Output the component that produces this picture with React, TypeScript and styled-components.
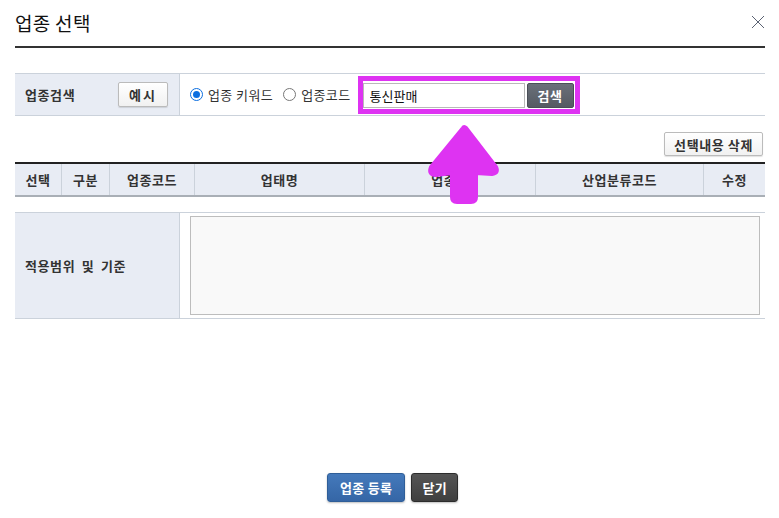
import React from "react";
import styled, { createGlobalStyle } from "styled-components";

const Global = createGlobalStyle`
  html, body { margin: 0; padding: 0; background: #fff; }
  body { font-family: "Noto Sans CJK KR", "Noto Sans", sans-serif; color: #333; }
  * { box-sizing: border-box; }
`;

const Dialog = styled.div`
  position: relative;
  width: 779px;
  height: 518px;
  padding: 0 14px 0 15px;
  display: flex;
  flex-direction: column;
`;

const Header = styled.div`
  height: 48px;
  border-bottom: 2px solid #333;
  display: flex;
  align-items: center;
  justify-content: space-between;
  padding-bottom: 2px;
`;

const Title = styled.h1`
  margin: 0;
  font-size: 19px;
  font-weight: 400;
  color: #111;
  letter-spacing: 0.3px;
`;

const CloseBtn = styled.button`
  border: 0;
  background: none;
  padding: 0;
  width: 14px;
  height: 14px;
  display: flex;
  cursor: pointer;
`;

const SearchRow = styled.div`
  margin-top: 25px;
  height: 43px;
  border-top: 1px solid #cbd2db;
  border-bottom: 1px solid #cbd2db;
  display: flex;
`;

const LabelCell = styled.div`
  width: 165px;
  flex: none;
  background: #e8ecf4;
  border-right: 1px solid #cbd2db;
  display: flex;
  align-items: center;
  justify-content: space-between;
  padding: 0 11px 0 10px;
  font-size: 13px;
  font-weight: 700;
  color: #333;
  letter-spacing: 0.6px;
  word-spacing: 3px;
`;

const ValueCell = styled.div`
  flex: 1;
  display: flex;
  align-items: center;
  padding-left: 10px;
  font-size: 13px;
`;

const GhostButton = styled.button<{ $wide?: boolean }>`
  height: ${(p) => (p.$wide ? "24px" : "25px")};
  padding: 0 ${(p) => (p.$wide ? "9px" : "10px")};
  border: 1px solid #bbb;
  border-radius: 2px;
  background: linear-gradient(#fff, #f1f1f1);
  box-shadow: 0 1px 1px rgba(0,0,0,0.12);
  font-family: inherit;
  font-size: 13px;
  font-weight: 700;
  color: #333;
  letter-spacing: ${(p) => (p.$wide ? "0.6px" : "2px")};
`;

const RadioLabel = styled.label<{ $gapAfter: number }>`
  display: flex;
  align-items: center;
  gap: 5px;
  margin-right: ${(p) => p.$gapAfter}px;
  color: #333;
  font-size: 13px;
  letter-spacing: 0.4px;
`;

const RadioDot = styled.span<{ $on?: boolean }>`
  width: 13px;
  height: 13px;
  border-radius: 50%;
  border: 1px solid ${(p) => (p.$on ? "#0b6ee0" : "#777")};
  display: flex;
  align-items: center;
  justify-content: center;
  background: #fff;
  &::after {
    content: "";
    width: 7px;
    height: 7px;
    border-radius: 50%;
    background: ${(p) => (p.$on ? "#0b6ee0" : "transparent")};
  }
`;

const Highlight = styled.div`
  display: flex;
  align-items: center;
  gap: 2px;
  border: 5px solid #de33f2;
  padding: 2px 1px 1px 0;
  height: 38px;
`;

const SearchInput = styled.input`
  width: 162px;
  height: 25px;
  border: 1px solid #b9b9b9;
  padding: 0 6px;
  font-family: inherit;
  font-size: 13px;
  color: #111;
  outline: none;
`;

const DarkButton = styled.button`
  height: 25px;
  width: 47px;
  border: 1px solid #4a4f58;
  border-radius: 2px;
  background: linear-gradient(#6a7079, #555a63);
  color: #fff;
  font-family: inherit;
  font-size: 13px;
  font-weight: 700;
  letter-spacing: 0.5px;
`;

const ToolRow = styled.div`
  display: flex;
  justify-content: flex-end;
  padding: 16px 2px 6px 0;
`;

const GridHeader = styled.div`
  display: grid;
  grid-template-columns: 47px 48px 85px 170px 171px 168px 61px;
  height: 35px;
  border-top: 2px solid #222;
  border-bottom: 2px solid #a9afb6;
  background: #e8ecf4;
`;

const HeadCell = styled.div<{ $last?: boolean }>`
  display: flex;
  align-items: center;
  justify-content: center;
  font-size: 13px;
  font-weight: 700;
  color: #333;
  letter-spacing: 0.5px;
  border-right: ${(p) => (p.$last ? "none" : "1px solid #cbd2db")};
`;

const ScopeRow = styled.div`
  margin-top: 15px;
  height: 107px;
  border-top: 1px solid #cbd2db;
  border-bottom: 1px solid #cbd2db;
  display: flex;
`;

const ScopeBox = styled.div`
  flex: 1;
  padding: 3px 5px 3px 10px;
  display: flex;
`;

const ScopeArea = styled.textarea`
  flex: 1;
  resize: none;
  background: #f9f9f9;
  border: 1px solid #bdbdbd;
  outline: none;
`;

const Footer = styled.div`
  margin-top: auto;
  margin-bottom: 16px;
  display: flex;
  justify-content: center;
  gap: 6px;
  padding-left: 5px;
`;

const FootButton = styled.button<{ $tone: "blue" | "dark" }>`
  height: 29px;
  padding: 0 ${(p) => (p.$tone === "blue" ? "12px" : "10px")};
  border: 1px solid ${(p) => (p.$tone === "blue" ? "#2f5e98" : "#2c2c2c")};
  border-radius: 3px;
  background: ${(p) => (p.$tone === "blue" ? "linear-gradient(#4479bb, #3566a6)" : "linear-gradient(#555, #3f3f3f)")};
  box-shadow: 0 1px 2px rgba(0,0,0,0.25);
  color: #fff;
  font-family: inherit;
  font-size: 13px;
  font-weight: 700;
  letter-spacing: 0.3px;
`;

const ArrowOverlay = styled.svg`
  position: absolute;
  left: 426px;
  top: 123px;
  pointer-events: none;
`;

const cols = ["선택", "구분", "업종코드", "업태명", "업종명", "산업분류코드", "수정"];

export default function App() {
  return (
    <>
      <Global />
      <Dialog>
        <Header>
          <Title>업종 선택</Title>
          <CloseBtn aria-label="닫기">
            <svg width="14" height="14" viewBox="0 0 14 14">
              <path d="M1 1 L13 13 M13 1 L1 13" stroke="#5a6272" strokeWidth="1" fill="none" />
            </svg>
          </CloseBtn>
        </Header>

        <SearchRow>
          <LabelCell>
            업종검색
            <GhostButton>예시</GhostButton>
          </LabelCell>
          <ValueCell>
            <RadioLabel $gapAfter={10}>
              <RadioDot $on />
              업종 키워드
            </RadioLabel>
            <RadioLabel $gapAfter={7}>
              <RadioDot />
              업종코드
            </RadioLabel>
            <Highlight>
              <SearchInput defaultValue="통신판매" />
              <DarkButton>검색</DarkButton>
            </Highlight>
          </ValueCell>
        </SearchRow>

        <ToolRow>
          <GhostButton $wide>선택내용 삭제</GhostButton>
        </ToolRow>

        <GridHeader>
          {cols.map((c, i) => (
            <HeadCell key={c} $last={i === cols.length - 1}>
              {c}
            </HeadCell>
          ))}
        </GridHeader>

        <ScopeRow>
          <LabelCell>적용범위 및 기준</LabelCell>
          <ScopeBox>
            <ScopeArea />
          </ScopeBox>
        </ScopeRow>

        <Footer>
          <FootButton $tone="blue">업종 등록</FootButton>
          <FootButton $tone="dark">닫기</FootButton>
        </Footer>

        <ArrowOverlay width="76" height="82" viewBox="0 0 76 82">
          <path
            d="M37 5 Q38 3 40 5 L70 44 Q73 50 66 51 L50 50 L50 74 Q50 79 45 79 L31 79 Q26 79 26 74 L26 50 L10 52 Q2 52 5 44 Z"
            fill="#de33f2"
            stroke="#de33f2"
            strokeWidth="4"
            strokeLinejoin="round"
          />
        </ArrowOverlay>
      </Dialog>
    </>
  );
}
